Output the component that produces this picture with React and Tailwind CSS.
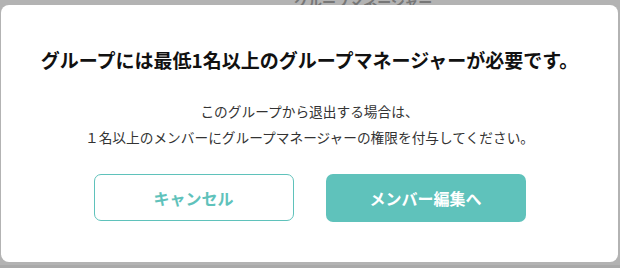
function ConfirmModal() {
  return (
    <div className="relative flex h-[257px] w-[617px] flex-col items-center rounded-[8px] bg-white">
      {/* タイトル */}
      <h2 className="mt-[41px] text-[19px] font-bold leading-[28px] text-[#111]">
        グループには最低1名以上のグループマネージャーが必要です。
      </h2>

      {/* 説明文 */}
      <div className="mt-[24px] text-center text-[13.7px] leading-[26px] text-[#333]">
        <p>このグループから退出する場合は、</p>
        <p>１名以上のメンバーにグループマネージャーの権限を付与してください。</p>
      </div>

      {/* ボタン */}
      <div className="mt-[24px] flex gap-[32px]">
        <button className="h-[47px] w-[200px] rounded-[7px] border border-[#5fc2bb] bg-white text-[16px] font-bold text-[#5fc2bb]">
          キャンセル
        </button>
        <button className="h-[48px] w-[200px] rounded-[7px] bg-[#5fc2bb] text-[16px] font-bold text-white">
          メンバー編集へ
        </button>
      </div>
    </div>
  );
}

export default function App() {
  return (
    <div
      className="relative h-[268px] w-[620px] overflow-hidden bg-[#b3b3b3] pl-[1px] pt-[5px]"
      style={{ fontFamily: '"Noto Sans CJK JP", "Noto Sans", sans-serif' }}
    >
      {/* 背景のページ見出し */}
      <div className="absolute left-[294px] top-[-9px] text-[14px] font-bold text-[#777]">
        グループマネージャー
      </div>
      <div className="absolute bottom-0 left-0 h-[3px] w-full bg-[#a9a9a9]" />
      <ConfirmModal />
    </div>
  );
}
